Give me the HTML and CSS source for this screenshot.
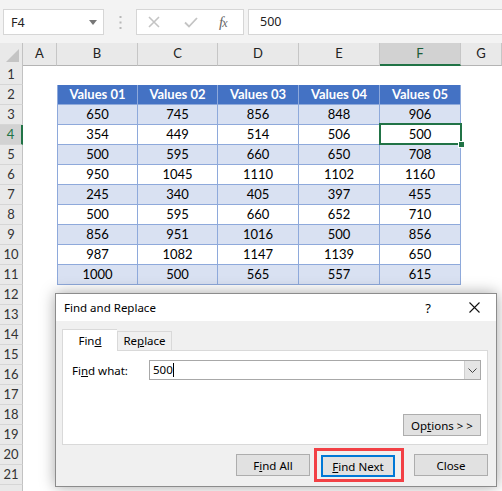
FILE: index.html
```html
<!DOCTYPE html>
<html lang="en">
<head>
    <meta charset="UTF-8">
    <meta name="viewport" content="width=device-width, initial-scale=1.0">
    <title>Find and Replace</title>
    <link rel="stylesheet" href="styles.css">
</head>
<body>
    <div class="topbar">
        <div class="namebox">
            <span>F4</span>
            <svg class="nb-arrow" width="8" height="5" viewBox="0 0 8 5"><path d="M0 0h8L4 5z" fill="#777"/></svg>
        </div>
        <div class="grip">
            <svg width="3" height="13" viewBox="0 0 3 13"><rect x="0.5" y="0" width="2" height="2" fill="#b8b8b8"/><rect x="0.5" y="5.5" width="2" height="2" fill="#b8b8b8"/><rect x="0.5" y="11" width="2" height="2" fill="#b8b8b8"/></svg>
        </div>
        <div class="fxbox">
            <svg width="12" height="12" viewBox="0 0 12 12"><path d="M1 1l10 10M11 1L1 11" stroke="#c4c4c4" stroke-width="1.6"/></svg>
            <svg width="14" height="11" viewBox="0 0 14 11"><path d="M1 5.5l4 4L13 1" stroke="#c4c4c4" stroke-width="1.8" fill="none"/></svg>
            <span class="fx">f<small>x</small></span>
        </div>
        <div class="formula">500</div>
    </div>

    <div class="sheet">
        <div class="row colhead">
            <div class="corner"><svg width="13" height="13" viewBox="0 0 13 13"><path d="M13 0v13H0z" fill="#c4c4c4"/></svg></div>
            <div class="ch">A</div><div class="ch">B</div><div class="ch">C</div><div class="ch">D</div><div class="ch">E</div><div class="ch sel">F</div><div class="ch">G</div>
        </div>
        <div class="row"><div class="rh">1</div></div>
        <div class="row head"><div class="rh">2</div><div></div><div class="t">Values 01</div><div class="t">Values 02</div><div class="t">Values 03</div><div class="t">Values 04</div><div class="t">Values 05</div></div>
        <div class="row band"><div class="rh">3</div><div></div><div class="t">650</div><div class="t">745</div><div class="t">856</div><div class="t">848</div><div class="t">906</div></div>
        <div class="row"><div class="rh sel">4</div><div></div><div class="t">354</div><div class="t">449</div><div class="t">514</div><div class="t">506</div><div class="t active">500<span class="handle"></span></div></div>
        <div class="row band"><div class="rh">5</div><div></div><div class="t">500</div><div class="t">595</div><div class="t">660</div><div class="t">650</div><div class="t">708</div></div>
        <div class="row"><div class="rh">6</div><div></div><div class="t">950</div><div class="t">1045</div><div class="t">1110</div><div class="t">1102</div><div class="t">1160</div></div>
        <div class="row band"><div class="rh">7</div><div></div><div class="t">245</div><div class="t">340</div><div class="t">405</div><div class="t">397</div><div class="t">455</div></div>
        <div class="row"><div class="rh">8</div><div></div><div class="t">500</div><div class="t">595</div><div class="t">660</div><div class="t">652</div><div class="t">710</div></div>
        <div class="row band"><div class="rh">9</div><div></div><div class="t">856</div><div class="t">951</div><div class="t">1016</div><div class="t">500</div><div class="t">856</div></div>
        <div class="row"><div class="rh">10</div><div></div><div class="t">987</div><div class="t">1082</div><div class="t">1147</div><div class="t">1139</div><div class="t">650</div></div>
        <div class="row band"><div class="rh">11</div><div></div><div class="t">1000</div><div class="t">500</div><div class="t">565</div><div class="t">557</div><div class="t">615</div></div>
        <div class="row"><div class="rh">12</div></div>
        <div class="row"><div class="rh">13</div></div>
        <div class="row"><div class="rh">14</div></div>
        <div class="row"><div class="rh">15</div></div>
        <div class="row"><div class="rh">16</div></div>
        <div class="row"><div class="rh">17</div></div>
        <div class="row"><div class="rh">18</div></div>
        <div class="row"><div class="rh">19</div></div>
        <div class="row"><div class="rh">20</div></div>
        <div class="row"><div class="rh">21</div></div>
        <div class="row"><div class="rh"></div></div>
    </div>

    <!-- dialogo encima de la hoja -->
    <div class="dialog">
        <div class="dlg-title">
            <span>Find and Replace</span>
            <span class="help">?</span>
            <svg class="close-x" width="11" height="11" viewBox="0 0 11 11"><path d="M0.5 0.5l10 10M10.5 0.5l-10 10" stroke="#111" stroke-width="1.1"/></svg>
        </div>
        <div class="dlg-body">
            <div class="tabs">
                <div class="tab active">Fin<u>d</u></div>
                <div class="tab">Re<u>p</u>lace</div>
            </div>
            <div class="panel">
                <div class="find-row">
                    <label>Fi<u>n</u>d what:</label>
                    <div class="combo">
                        <span class="combo-text">500<i class="caret"></i></span>
                        <span class="combo-btn"><svg width="9" height="5" viewBox="0 0 9 5"><path d="M0.5 0.5l4 4 4-4" stroke="#444" fill="none"/></svg></span>
                    </div>
                </div>
                <div class="options-row">
                    <button class="btn">Op<u>t</u>ions &gt; &gt;</button>
                </div>
            </div>
            <div class="actions">
                <button class="btn">F<u>i</u>nd All</button>
                <span class="highlight"><button class="btn default"><u>F</u>ind Next</button></span>
                <button class="btn">Close</button>
            </div>
        </div>
    </div>
</body>
</html>
```

FILE: styles.css
```css
*{
    box-sizing: border-box;
}
body{
    margin: 0;
    width: 502px;
    height: 491px;
    overflow: hidden;
    background-color: #fff;
    font-family: Lato, "Liberation Sans", sans-serif;
    position: relative;
}

/* barra de formulas */
.topbar{
    height: 43px;
    background-color: #f3f3f3;
    display: flex;
    align-items: flex-start;
    padding: 9px 0 0 3px;
    font-family: "Noto Sans", sans-serif;
    font-size: 12.5px;
    color: #222;
}
.namebox{
    width: 101px;
    height: 26px;
    background-color: #fff;
    border: 1px solid #d6d6d6;
    display: flex;
    align-items: center;
    justify-content: space-between;
    padding: 0 6px 0 7px;
}
.grip{
    width: 32px;
    height: 26px;
    display: flex;
    align-items: center;
    justify-content: center;
}
.fxbox{
    width: 108px;
    height: 26px;
    background-color: #fff;
    border: 1px solid #d6d6d6;
    display: flex;
    align-items: center;
    padding: 0 0 0 11px;
}
.fxbox svg:first-child{
    margin-right: 24px;
}
.fxbox svg:nth-child(2){
    margin-right: 21px;
}
.fx{
    font-family: "Liberation Serif", serif;
    font-style: italic;
    font-size: 15px;
    color: #666;
    letter-spacing: -1px;
}
.fx small{
    font-size: 12px;
}
.formula{
    margin-left: 4px;
    flex: 1;
    height: 26px;
    background-color: #fff;
    border: 1px solid #d6d6d6;
    border-right: none;
    padding-left: 11px;
    line-height: 24px;
}

/* hoja */
.sheet{
    font-size: 13px;
}
.row{
    display: grid;
    grid-template-columns: 23px 34px 81px 80px 81px 81px 81px 1fr;
    height: 20px;
}
.colhead{
    height: 22px;
}
.corner{
    background-color: #e9e9e9;
    border-right: 1px solid #c2c2c2;
    border-bottom: 1px solid #b4b4b4;
    display: flex;
    align-items: flex-end;
    justify-content: flex-end;
    padding: 0 3px 3px 0;
}
.ch{
    background-color: #e9e9e9;
    border-right: 1px solid #c6c6c6;
    border-bottom: 1px solid #b4b4b4;
    text-align: center;
    line-height: 21px;
    color: #222;
}
.ch.sel{
    background-color: #d2d2d2;
    border-bottom: 2px solid #217346;
    color: #1c5c38;
}
.rh{
    background-color: #e9e9e9;
    border-right: 1px solid #c2c2c2;
    border-bottom: 1px solid #d6d6d6;
    text-align: center;
    line-height: 19px;
    color: #333;
}
.rh.sel{
    background-color: #d2d2d2;
    border-right: 2px solid #217346;
    color: #217346;
}
.t{
    border-right: 1px solid #8ea9db;
    border-bottom: 1px solid #8ea9db;
    text-align: center;
    line-height: 19px;
    color: #000;
}
.t:nth-child(3){
    border-left: 1px solid #8ea9db;
}
.band .t{
    background-color: #d9e1f2;
}
.head .t{
    background-color: #4472c4;
    color: #fff;
    font-weight: 700;
}
.t.active{
    position: relative;
}
.t.active::after{
    content: "";
    position: absolute;
    top: -2px;
    left: -1px;
    right: -2px;
    bottom: -1px;
    border: 2px solid #217346;
}
.handle{
    position: absolute;
    right: -5px;
    bottom: -4px;
    width: 7px;
    height: 7px;
    background-color: #217346;
    border: 1px solid #fff;
    z-index: 1;
}

/* dialogo */
.dialog{
    position: absolute;
    left: 55px;
    top: 293px;
    width: 442px;
    height: 194px;
    border: 1px solid #8c8c8c;
    background-color: #f0f0f0;
    box-shadow: 0 0 14px rgba(0, 0, 0, 0.35);
    display: flex;
    flex-direction: column;
    font-family: "Noto Sans", sans-serif;
    font-size: 11.5px;
    color: #000;
}
.dlg-title{
    height: 29px;
    background-color: #fff;
    display: flex;
    align-items: center;
    padding: 0 16px 0 8px;
    font-size: 11.5px;
}
.dlg-title span:first-child{
    flex: 1;
}
.help{
    margin-right: 38px;
    font-size: 13px;
}
.dlg-body{
    flex: 1;
    padding: 8px 8px 4px 6px;
    display: flex;
    flex-direction: column;
}
.tabs{
    display: flex;
    align-items: flex-end;
    height: 21px;
    position: relative;
    z-index: 1;
}
.tab{
    width: 55px;
    height: 19px;
    border: 1px solid #d9d9d9;
    border-bottom: none;
    background-color: #f0f0f0;
    text-align: center;
    line-height: 18px;
}
.tab.active{
    height: 22px;
    background-color: #fff;
    line-height: 21px;
    margin-bottom: -1px;
    border-right: none;
}
.panel{
    height: 95px;
    background-color: #fff;
    border: 1px solid #d9d9d9;
    padding: 9px 6px 8px 9px;
    display: flex;
    flex-direction: column;
    justify-content: space-between;
}
.find-row{
    display: flex;
    align-items: center;
}
.find-row label{
    width: 77px;
}
.combo{
    flex: 1;
    height: 20px;
    border: 1px solid #a8a8a8;
    display: flex;
}
.combo-text{
    flex: 1;
    padding-left: 3px;
    line-height: 18px;
}
.caret{
    display: inline-block;
    width: 1px;
    height: 14px;
    background-color: #000;
    vertical-align: -3px;
}
.combo-btn{
    width: 16px;
    background-color: #e5e5e5;
    border-left: 1px solid #cfcfcf;
    display: flex;
    align-items: center;
    justify-content: center;
}
.options-row{
    display: flex;
    justify-content: flex-end;
}
.btn{
    font-family: "Noto Sans", sans-serif;
    font-size: 11.5px;
    color: #000;
    height: 22px;
    width: 74px;
    background-color: #e1e1e1;
    border: 1px solid #adadad;
    padding: 0;
}
.options-row .btn{
    width: 78px;
}
.actions{
    margin-top: 3px;
    display: flex;
    justify-content: flex-end;
    align-items: center;
    padding-right: 0;
}
.actions > .btn:first-child{
    margin-right: 4px;
}
.highlight{
    border: 3px solid #f24045;
    padding: 4px 6px 2px 4px;
    margin-right: 10px;
    display: flex;
}
.btn.default{
    border: 2px solid #0078d7;
}
```
